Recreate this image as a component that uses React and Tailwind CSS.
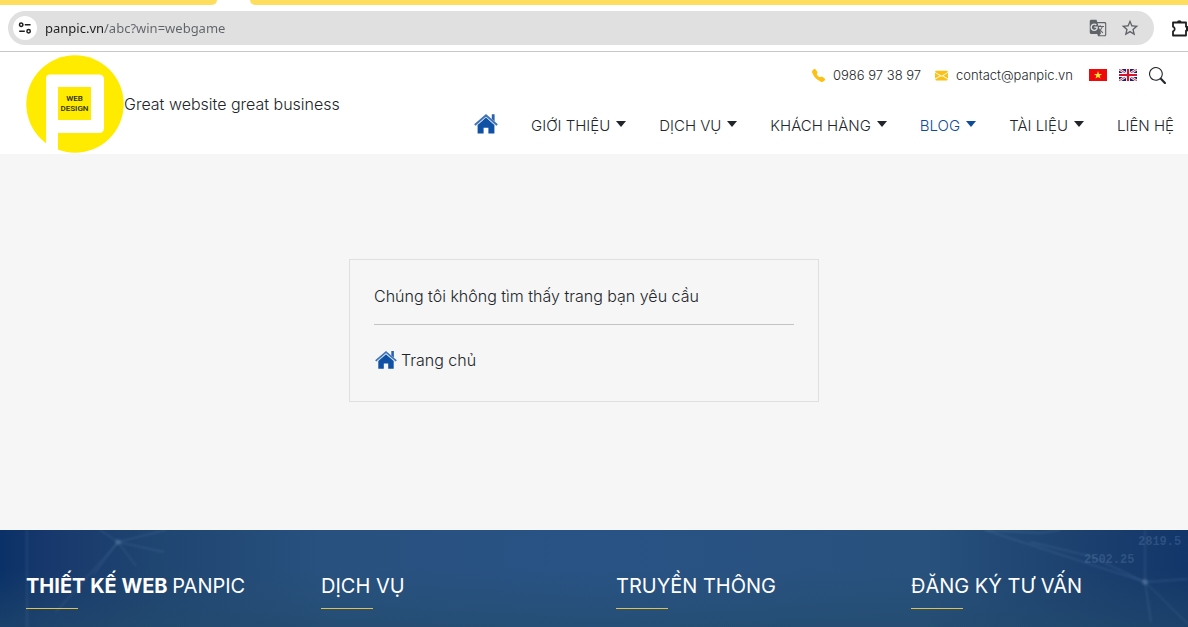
import { BsTelephoneFill, BsEnvelopeFill, BsSearch } from "react-icons/bs";
import { MdGTranslate, MdStarBorder } from "react-icons/md";

const NAV = [
  { label: "GIỚI THIỆU", menu: true },
  { label: "DỊCH VỤ", menu: true },
  { label: "KHÁCH HÀNG", menu: true },
  { label: "BLOG", menu: true, active: true },
  { label: "TÀI LIỆU", menu: true },
  { label: "LIÊN HỆ" },
];

const COLUMNS = [
  { bold: "THIẾT KẾ WEB", rest: "PANPIC" },
  { rest: "DỊCH VỤ" },
  { rest: "TRUYỀN THÔNG" },
  { rest: "ĐĂNG KÝ TƯ VẤN" },
];

function HomeIcon({ className }) {
  return (
    <svg viewBox="0 0 24 20" className={className} aria-hidden="true">
      <path d="M17.800 .3h2.800v7.200l-2.800-2.500z" fill="#2a62ac" />
      <path d="M12 3.600 3.600 11V19.600h6v-5.800h4.800v5.800h6V11z" fill="#0f52a5" />
      <path d="M.8 11 12 1.400 23.200 11" fill="none" stroke="#3f74b8" strokeWidth="2" />
      <path d="M2.600 11.200 12 3.100l9.400 8.100" fill="none" stroke="#b9cde8" strokeWidth=".7" />
    </svg>
  );
}

function Logo() {
  return (
    <svg viewBox="0 0 98 98" className="size-[98px] shrink-0" role="img" aria-label="Web design">
      <circle cx="49" cy="49" r="48.700" fill="#ffeb00" />
      <path
        d="M24 19.500H73Q78 19.500 78 24.500V73Q78 78 73 78H32V98H20V23.500Q20 19.500 24 19.500Z"
        fill="#fff"
      />
      <rect x="32" y="32" width="33" height="33" fill="#ffeb00" />
      <g fill="#33331a" fontFamily="'Roboto', 'Liberation Sans', sans-serif" fontWeight="600" fontSize="8" textAnchor="middle">
        <text x="48.500" y="46">WEB</text>
        <text x="48.500" y="56">DESIGN</text>
      </g>
    </svg>
  );
}

function SiteInfoIcon() {
  return (
    <svg viewBox="0 0 14 14" className="size-[14px]" fill="none" stroke="#1f1f1f" strokeWidth="1.500" aria-hidden="true">
      <circle cx="3.200" cy="3.700" r="1.700" />
      <path d="M6.800 3.700H12.500M1.200 10.300H6.800" />
      <circle cx="10.600" cy="10.300" r="1.700" />
    </svg>
  );
}

function ExtensionIcon() {
  return (
    <svg viewBox="0 0 20 20" className="size-5" aria-hidden="true">
      <path
        d="M3 4.500h13v4.200a2 2 0 0 1 0 4V17.500H3v-4.200a2.400 2.400 0 0 0 0-4.600z"
        fill="none"
        stroke="#1f1f1f"
        strokeWidth="1.800"
        strokeLinejoin="round"
      />
      <path d="M7 4.500a2.300 2.300 0 0 1 4.600 0zM16 8.500a2.300 2.300 0 0 1 0 4.600z" fill="#1f1f1f" />
    </svg>
  );
}

function FlagVn() {
  return (
    <svg viewBox="0 0 18 12" className="h-3 w-[18px]" aria-hidden="true">
      <rect width="18" height="12" fill="#ee0a0a" />
      <path d="M9 2l1 2.900h3l-2.400 1.800.9 2.900L9 7.900 6.500 9.600l.9-2.900L5 4.900h3z" fill="#ffe92e" />
    </svg>
  );
}

function FlagUk() {
  return (
    <svg viewBox="0 0 18 12" className="h-3 w-[18px]" aria-hidden="true">
      <rect width="18" height="12" fill="#1d1f6e" />
      <path d="M0 0l18 12M18 0L0 12" stroke="#f3eef2" strokeWidth="2.600" />
      <path d="M0 0l18 12M18 0L0 12" stroke="#cf3550" strokeWidth=".9" />
      <path d="M9 0v12M0 6h18" stroke="#fff" strokeWidth="4" />
      <path d="M9 0v12M0 6h18" stroke="#d4142f" strokeWidth="2.200" />
    </svg>
  );
}

function BrowserBar() {
  return (
    <div className="border-b border-[#c7c7c7] bg-white">
      <div className="flex h-[5px]">
        <div className="w-[217px] rounded-br-[8px] bg-[#ffde5e]" />
        <div className="w-[33px]" />
        <div className="flex-1 rounded-bl-[8px] bg-[#ffde5e]" />
      </div>
      <div className="flex items-center overflow-hidden pt-1.5 pb-1.5 pl-2">
        <div className="flex h-[34px] flex-1 items-center rounded-full bg-[#e0e0e0] pr-[14px] pl-[5px]">
          <button aria-label="Site information" className="flex size-6 items-center justify-center rounded-full bg-white">
            <SiteInfoIcon />
          </button>
          <input
            aria-label="Address"
            defaultValue="panpic.vn/abc?win=webgame"
            className="ml-2 min-w-0 flex-1 bg-linear-to-r from-[#1f1f1f] from-[59px] to-[#5f6368] to-[59px] bg-clip-text font-['Noto_Sans','Open_Sans',sans-serif] text-[13px] font-normal text-transparent outline-none"
          />
          <button aria-label="Translate this page" className="text-[#5f6368]">
            <MdGTranslate className="size-[18px]" />
          </button>
          <button aria-label="Bookmark this page" className="ml-[13px] text-[#5f6368]">
            <MdStarBorder className="size-5" />
          </button>
        </div>
        <button aria-label="Extensions" className="-mr-0.5 ml-4 shrink-0">
          <ExtensionIcon />
        </button>
      </div>
    </div>
  );
}

function Header() {
  return (
    <header className="flex justify-between bg-white pt-0.5 pr-[14px] pl-[26px]">
      <a href="#home" className="flex h-[100px] items-center">
        <Logo />
        <span>Great website great business</span>
      </a>
      <div className="flex flex-col items-end">
        <div className="flex h-[42px] items-center pr-2 text-[13px]">
          <a href="tel:0986973897" className="flex items-center">
            <BsTelephoneFill className="mr-2 size-[13px] text-[#fdc116]" />
            0986 97 38 97
          </a>
          <a href="mailto:contact@panpic.vn" className="ml-[14px] flex items-center">
            <BsEnvelopeFill className="mr-2 size-[13px] text-[#fdc116]" />
            contact@panpic.vn
          </a>
          <a href="#vi" aria-label="Tiếng Việt" className="ml-4">
            <FlagVn />
          </a>
          <a href="#en" aria-label="English" className="ml-3">
            <FlagUk />
          </a>
          <button aria-label="Tìm kiếm" className="ml-3">
            <BsSearch className="size-[17px]" />
          </button>
        </div>
        <nav className="flex h-[58px] items-center gap-[33px] pt-0.5 text-[15px]">
          <a href="#home" aria-label="Trang chủ">
            <HomeIcon className="mb-1 h-5 w-6" />
          </a>
          {NAV.map((item) => (
            <a
              key={item.label}
              href="#menu"
              className={item.active ? "flex items-center gap-1.5 text-[#0f4c97]" : "flex items-center gap-1.5"}
            >
              {item.label}
              {item.menu && (
                <svg viewBox="0 0 10 10" className="size-2.5" fill="currentColor" aria-hidden="true">
                  <path d="M0 0h10L5 6z" />
                </svg>
              )}
            </a>
          ))}
        </nav>
      </div>
    </header>
  );
}

function FooterBackdrop() {
  return (
    <svg
      viewBox="0 0 1188 97"
      preserveAspectRatio="xMidYMin slice"
      className="absolute inset-0 h-full w-full"
      aria-hidden="true"
    >
      <defs>
        <linearGradient id="sea" x1="0" x2="1" y1="0" y2="0">
          <stop offset="0" stopColor="#0a3168" />
          <stop offset=".04" stopColor="#17386c" />
          <stop offset=".13" stopColor="#1f4571" />
          <stop offset=".27" stopColor="#28517f" />
          <stop offset=".5" stopColor="#295385" />
          <stop offset=".78" stopColor="#28517d" />
          <stop offset=".9" stopColor="#1d4270" />
          <stop offset="1" stopColor="#123669" />
        </linearGradient>
        <linearGradient id="shade" x1="0" x2="0" y1="0" y2="1">
          <stop offset=".4" stopColor="#234b6c" stopOpacity="0" />
          <stop offset="1" stopColor="#234b6c" stopOpacity=".6" />
        </linearGradient>
        <filter id="soft">
          <feGaussianBlur stdDeviation=".8" />
        </filter>
      </defs>
      <rect width="1188" height="97" fill="url(#sea)" />
      <rect width="1188" height="97" fill="url(#shade)" />
      <g stroke="#7fa3cc" strokeOpacity=".26" fill="none" filter="url(#soft)">
        <path d="M27 0v97M118 12L100 0M118 12l48-12M118 12l46 10M118 12l18 24M118 12L94 44M118 12L56 82" />
        <path d="M985 0l160 52M1040 3L985 0M1145 52l43-3M1145 52l43 42M1145 52l6 40M1145 52V0M1040 3l20-3" />
        <path d="M1145 52L1090 26L1030 12" />
      </g>
      <g filter="url(#soft)">
        <circle cx="118" cy="12" r="3" fill="#8fb0d4" fillOpacity=".2" />
        <circle cx="1145" cy="52" r="3" fill="#8fb0d4" fillOpacity=".25" />
      </g>
      <g fill="#7fa3cc" fillOpacity=".24" fontFamily="'Liberation Mono', monospace" fontWeight="700" fontSize="12">
        <text x="1084" y="33">2502.25</text>
        <text x="1138" y="15">2819.5</text>
      </g>
    </svg>
  );
}

function Footer() {
  return (
    <footer className="relative grow overflow-hidden bg-[#28517f]">
      <FooterBackdrop />
      <div className="relative -mr-[18px] grid grid-cols-4 pt-10 pb-[18px] pl-[26px] text-white">
        {COLUMNS.map((col) => (
          <section key={col.rest}>
            <h2 className="text-[20px] leading-8 font-normal whitespace-nowrap">
              {col.bold && <strong className="font-bold">{col.bold} </strong>}
              {col.rest}
            </h2>
            <div className="mt-1.5 h-px w-[52px] bg-[#e3c146]" />
          </section>
        ))}
      </div>
    </footer>
  );
}

export default function App() {
  return (
    <div className="flex min-h-screen flex-col overflow-x-hidden bg-[#f6f6f6] font-['Inter','Roboto',sans-serif] text-[16px] leading-6 font-light text-[#212529]">
      <BrowserBar />
      <Header />
      <main className="flex justify-center pt-[105px] pr-5 pb-32">
        <div className="w-full max-w-[470px] border border-[#e0e0e0] px-6 pt-6 pb-[29px]">
          <p>Chúng tôi không tìm thấy trang bạn yêu cầu</p>
          <hr className="mt-4 mb-[23px] border-[#c2c3c4]" />
          <a href="#home" className="flex items-center gap-1">
            <HomeIcon className="ml-px h-5 w-[22px]" />
            Trang chủ
          </a>
        </div>
      </main>
      <Footer />
    </div>
  );
}
